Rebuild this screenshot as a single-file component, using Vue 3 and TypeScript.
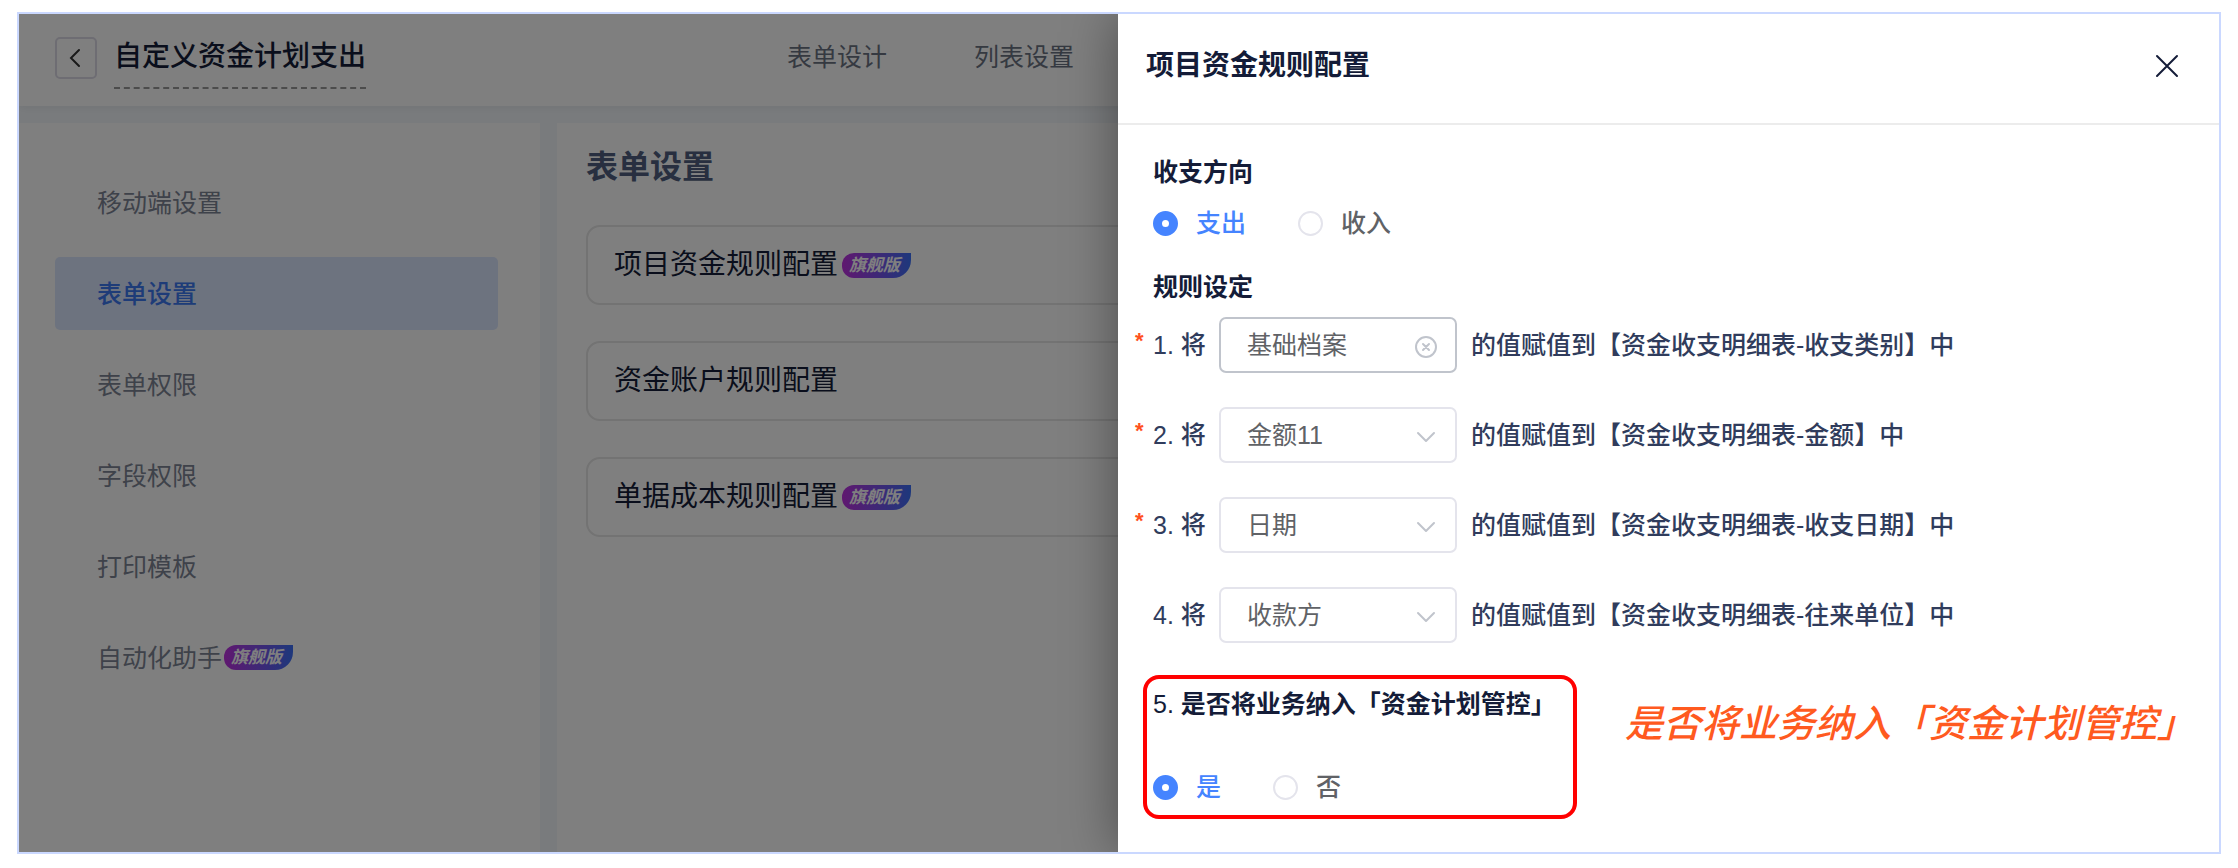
<script setup lang="ts">
import { ref } from 'vue'

interface MenuItem {
  label: string
  flagship?: boolean
}

interface Rule {
  no: number
  required: boolean
  value: string
  clearable: boolean
  target: string
}

const tabs: string[] = ['表单设计', '列表设置']

const menu: MenuItem[] = [
  { label: '移动端设置' },
  { label: '表单设置' },
  { label: '表单权限' },
  { label: '字段权限' },
  { label: '打印模板' },
  { label: '自动化助手', flagship: true },
]
const activeMenu = ref('表单设置')

const cards: MenuItem[] = [
  { label: '项目资金规则配置', flagship: true },
  { label: '资金账户规则配置' },
  { label: '单据成本规则配置', flagship: true },
]

const rules = ref<Rule[]>([
  { no: 1, required: true, value: '基础档案', clearable: true, target: '收支类别' },
  { no: 2, required: true, value: '金额11', clearable: false, target: '金额' },
  { no: 3, required: true, value: '日期', clearable: false, target: '收支日期' },
  { no: 4, required: false, value: '收款方', clearable: false, target: '往来单位' },
])
const fieldOptions: string[] = ['基础档案', '金额11', '日期', '收款方']

const direction = ref('支出')
const planControl = ref('是')
</script>

<template>
  <div class="page">
    <div class="frame">
      <div class="workspace">
        <header class="topbar">
          <button class="back" type="button" aria-label="返回">
            <svg width="12" height="20" viewBox="0 0 12 20" fill="none">
              <path d="M10 2 2 10l8 8" stroke="#333" stroke-width="2" stroke-linecap="round" />
            </svg>
          </button>
          <h1 class="form-name">自定义资金计划支出</h1>
          <nav class="tabs">
            <a v-for="tab in tabs" :key="tab" href="#">{{ tab }}</a>
          </nav>
        </header>

        <div class="columns">
          <nav class="sidebar">
            <a
              v-for="item in menu"
              :key="item.label"
              href="#"
              class="menu-item"
              :class="{ active: item.label === activeMenu }"
              @click.prevent="activeMenu = item.label"
            >
              {{ item.label }}<span v-if="item.flagship" class="badge deep">旗舰版</span>
            </a>
          </nav>
          <main class="content">
            <h2>表单设置</h2>
            <button v-for="card in cards" :key="card.label" type="button" class="card">
              {{ card.label }}<span v-if="card.flagship" class="badge">旗舰版</span>
            </button>
          </main>
        </div>
      </div>

      <div class="mask"></div>

      <section class="drawer" role="dialog" aria-labelledby="drawer-title">
        <header class="drawer-head">
          <h2 id="drawer-title">项目资金规则配置</h2>
          <button class="close" type="button" aria-label="关闭">
            <svg width="24" height="24" viewBox="0 0 24 24" fill="none">
              <path d="M2 2l20 20M22 2 2 22" stroke="#141c38" stroke-width="2" stroke-linecap="round" />
            </svg>
          </button>
        </header>

        <div class="drawer-body">
          <h3>收支方向</h3>
          <div class="radios" role="radiogroup" aria-label="收支方向">
            <label v-for="opt in ['支出', '收入']" :key="opt" class="radio">
              <input v-model="direction" type="radio" name="direction" :value="opt" />
              <span>{{ opt }}</span>
            </label>
          </div>

          <h3 class="rules-title">规则设定</h3>
          <div class="rules">
            <div v-for="rule in rules" :key="rule.no" class="rule">
              <span class="star">{{ rule.required ? '*' : '' }}</span>
              <label class="prefix" :for="`rule-${rule.no}`">{{ rule.no }}. 将</label>
              <span class="select" :class="{ hovered: rule.clearable }">
                <select :id="`rule-${rule.no}`" v-model="rule.value">
                  <option v-for="field in fieldOptions" :key="field">{{ field }}</option>
                </select>
                <svg v-if="rule.clearable" width="24" height="24" viewBox="0 0 24 24" fill="none" stroke="#c0c4cc" stroke-width="2">
                  <circle cx="12" cy="12" r="10" />
                  <path d="M9 9l6 6M15 9l-6 6" stroke-linecap="round" />
                </svg>
                <svg v-else width="24" height="24" viewBox="0 0 24 24" fill="none" stroke="#c0c4cc" stroke-width="2">
                  <path d="M4 8l8 8 8-8" stroke-linecap="round" stroke-linejoin="round" />
                </svg>
              </span>
              <span class="suffix">的值赋值到【资金收支明细表-{{ rule.target }}】中</span>
            </div>
          </div>

          <div class="plan">
            <div class="plan-box">
              <h3><span class="num">5. </span>是否将业务纳入「资金计划管控」</h3>
              <div class="radios" role="radiogroup" aria-label="是否将业务纳入「资金计划管控」">
                <label v-for="opt in ['是', '否']" :key="opt" class="radio">
                  <input v-model="planControl" type="radio" name="plan" :value="opt" />
                  <span>{{ opt }}</span>
                </label>
              </div>
            </div>
            <p class="note">是否将业务纳入「资金计划管控」</p>
          </div>
        </div>
      </section>
    </div>
  </div>
</template>

<style>
body {
  margin: 0;
  background: #fff;
}
</style>

<style scoped>
* {
  box-sizing: border-box;
}

.page {
  min-height: 100vh;
  padding: 12px 17px 14px;
  display: flex;
  font-family: 'Liberation Sans', 'Noto Sans CJK SC', sans-serif;
  font-size: 25px;
  line-height: 36px;
}

h1,
h2,
h3,
p {
  margin: 0;
}

a {
  text-decoration: none;
  color: inherit;
}

button {
  font: inherit;
  cursor: pointer;
}

.frame {
  position: relative;
  flex: 1;
  display: flex;
  border: 2px solid #cad8ff;
  overflow: hidden;
}

.workspace {
  flex: 1;
  display: flex;
  flex-direction: column;
  background: #f3f7fb;
}

.topbar {
  height: 92px;
  padding-left: 36px;
  display: flex;
  align-items: flex-start;
  background: #fff;
  box-shadow: 0 2px 8px rgba(0, 0, 0, 0.06);
  z-index: 1;
}

.back {
  width: 42px;
  height: 42px;
  margin-top: 23px;
  padding: 0 2px 0 0;
  display: grid;
  place-items: center;
  background: #fff;
  border: 2px solid #dcdae6;
  border-radius: 5px;
}

.form-name {
  margin: 23px 0 0 17px;
  padding-bottom: 10px;
  border-bottom: 2px dashed #999;
  font-size: 28px;
  line-height: 40px;
  font-weight: 500;
  color: #141c38;
}

.tabs {
  margin: 25px 0 0 421px;
  display: flex;
  gap: 87px;
  color: #6a7282;
}

.columns {
  flex: 1;
  display: flex;
  gap: 17px;
  padding-top: 17px;
}

.sidebar {
  width: 521px;
  padding: 43px 42px 0 36px;
  display: flex;
  flex-direction: column;
  gap: 18px;
  background: #fff;
}

.menu-item {
  height: 73px;
  padding-left: 42px;
  display: flex;
  align-items: center;
  border-radius: 5px;
  color: #7c8494;
}

.menu-item.active {
  background: #dbe6ff;
  color: #3c78f0;
  font-weight: 500;
}

.badge {
  width: 69px;
  height: 25px;
  margin-left: 4px;
  padding-right: 4px;
  display: inline-flex;
  align-items: center;
  justify-content: center;
  border-radius: 12px 0 18px 12px;
  background: linear-gradient(90deg, #c030e0, #3c70f8);
  color: #fff;
  font-size: 17px;
  line-height: 25px;
  font-weight: 600;
  font-style: italic;
}

.badge.deep {
  margin-left: 2px;
}

.content {
  flex: 1;
  padding: 22px 36px 0 29px;
  display: flex;
  flex-direction: column;
  gap: 36px;
  background: #fff;
}

.content h2 {
  font-size: 32px;
  line-height: 44px;
  font-weight: 600;
  color: #505f80;
}

.card {
  height: 80px;
  padding: 0 26px;
  display: flex;
  align-items: center;
  background: #fff;
  border: 2px solid #e6e6e6;
  border-radius: 14px;
  color: #141c38;
  font-size: 28px;
  text-align: left;
}

.mask {
  position: absolute;
  inset: 0;
  z-index: 2;
  background: rgba(0, 0, 0, 0.5);
}

.drawer {
  position: absolute;
  top: 0;
  right: 0;
  bottom: 0;
  z-index: 3;
  width: calc(50% + 1px);
  background: #fff;
  box-shadow: 0 0 50px rgba(0, 0, 0, 0.4);
  color: #141c38;
}

.drawer-head {
  height: 111px;
  padding: 0 40px 6px 28px;
  display: flex;
  align-items: center;
  justify-content: space-between;
  border-bottom: 2px solid #ececec;
}

.drawer-head h2 {
  font-size: 28px;
  line-height: 40px;
  font-weight: 600;
}

.close {
  width: 24px;
  height: 24px;
  padding: 0;
  border: 0;
  background: none;
}

.close svg {
  display: block;
}

.drawer-body {
  padding: 29px 24px 0 16px;
}

.drawer-body h3 {
  padding-left: 19px;
  font-size: 25px;
  line-height: 36px;
  font-weight: 600;
}

.radios {
  padding: 15px 0 0 19px;
  display: flex;
  gap: 52px;
}

.radio {
  display: flex;
  align-items: center;
  gap: 18px;
  font-weight: 500;
  color: #606266;
}

.radio:has(input:checked) {
  color: #4584ff;
}

.radio input {
  appearance: none;
  width: 25px;
  height: 25px;
  margin: 0;
  border: 2px solid #e4e4ec;
  border-radius: 50%;
  background: #fff;
}

.radio input:checked {
  border: 9px solid #4584ff;
}

.drawer-body .rules-title {
  margin-top: 28px;
}

.rules {
  margin-top: 12px;
  display: flex;
  flex-direction: column;
  gap: 34px;
}

.rule {
  height: 56px;
  display: flex;
  align-items: center;
  font-weight: 500;
  color: #303c5c;
}

.star {
  width: 19px;
  padding: 0 0 8px 1px;
  font-size: 22px;
  font-weight: 600;
  color: #ff5020;
}

.prefix {
  width: 66px;
}

.select {
  position: relative;
  width: 238px;
  height: 56px;
}

.select select {
  appearance: none;
  width: 100%;
  height: 100%;
  padding: 0 60px 0 26px;
  border: 2px solid #e4e4ec;
  border-radius: 7px;
  background: #fff;
  font: inherit;
  font-weight: 400;
  color: #606266;
}

.select.hovered select {
  border-color: #c0c4cc;
}

.select svg {
  position: absolute;
  right: 19px;
  top: 18px;
  pointer-events: none;
}

.suffix {
  margin-left: 14px;
}

.plan {
  margin: 32px 0 0 9px;
  display: flex;
  align-items: flex-start;
  gap: 48px;
}

.plan-box {
  width: 434px;
  height: 144px;
  padding: 7px 0 0 6px;
  border: 4px solid #f00;
  border-radius: 16px;
}

.plan-box h3 {
  padding-left: 0;
  white-space: nowrap;
}

.num {
  font-weight: 500;
}

.plan-box .radios {
  padding: 47px 0 0;
}

.note {
  padding-top: 21px;
  font-size: 38px;
  line-height: 56px;
  font-weight: 500;
  font-style: italic;
  white-space: nowrap;
  color: #ff5a1f;
}
</style>
